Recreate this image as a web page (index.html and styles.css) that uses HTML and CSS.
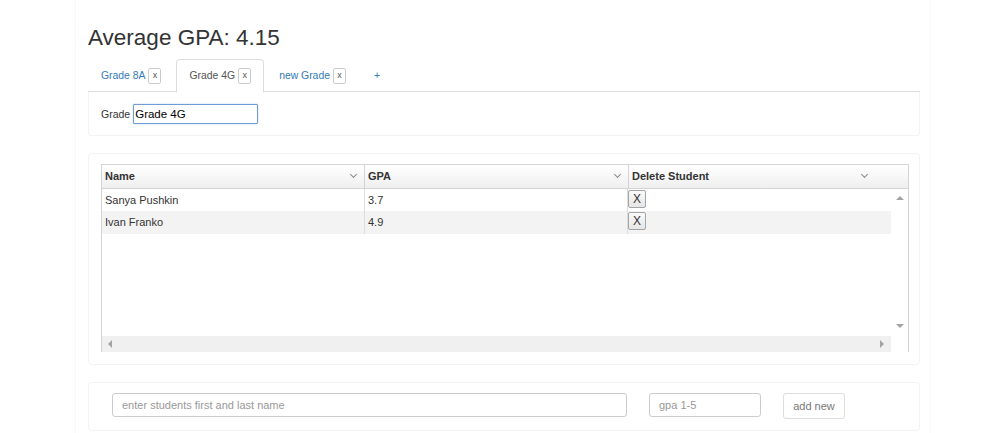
FILE: index.html
```html
<!DOCTYPE html>
<html>
<head>
<meta charset="utf-8">
<link rel="stylesheet" href="styles.css">
</head>
<body>
<div class="outer">
  <div class="container">
    <h1 class="title">Average GPA: 4.15</h1>
    <ul class="tabs">
      <li class="tab"><span class="tab-label">Grade 8A</span><span class="xbox">x</span></li>
      <li class="tab active"><span class="tab-label">Grade 4G</span><span class="xbox">x</span></li>
      <li class="tab"><span class="tab-label">new Grade</span><span class="xbox">x</span></li>
      <li class="tab"><span class="tab-label">+</span></li>
    </ul>
    <div class="panel panel-grade">
      <label class="grade-label">Grade</label>
      <input class="grade-input" type="text" value="Grade 4G">
    </div>
    <div class="panel panel-grid">
      <div class="grid">
        <div class="grid-header">
          <div class="hcell c1"><span>Name</span><span class="chev"></span></div>
          <div class="hcell c2"><span>GPA</span><span class="chev"></span></div>
          <div class="hcell c3"><span>Delete Student</span><span class="chev"></span></div>
        </div>
        <div class="grid-body">
          <div class="viewport">
            <div class="rows">
              <div class="row">
                <div class="cell c1">Sanya Pushkin</div>
                <div class="cell c2">3.7</div>
                <div class="cell c3"><button class="xbtn">X</button></div>
              </div>
              <div class="row alt">
                <div class="cell c1">Ivan Franko</div>
                <div class="cell c2">4.9</div>
                <div class="cell c3"><button class="xbtn">X</button></div>
              </div>
            </div>
            <div class="hscroll"><span class="arr arr-left"></span><span class="arr arr-right"></span></div>
          </div>
          <div class="vscroll"><span class="arr arr-up"></span><span class="arr arr-down"></span></div>
        </div>
      </div>
    </div>
    <div class="panel panel-add">
      <input class="name-input" type="text" placeholder="enter students first and last name">
      <input class="gpa-input" type="text" placeholder="gpa 1-5">
      <button class="add-btn">add new</button>
    </div>
  </div>
</div>
</body>
</html>
```

FILE: styles.css
```css
* { box-sizing: border-box; }
html, body { margin: 0; padding: 0; background: #fff; }
body {
  font-family: "Liberation Sans", Arial, Helvetica, sans-serif;
  color: #333;
  font-size: 11px;
}
.outer {
  margin-left: 75px;
  width: 856px;
  min-height: 433px;
  border-left: 1px solid #f9f9f9;
  border-right: 1px solid #f9f9f9;
  padding: 0 11px 0 12px;
}
.container { width: 832px; }
.title {
  margin: 0;
  padding-top: 24px;
  font-size: 22.5px;
  font-weight: normal;
  line-height: 28px;
  height: 59px;
  color: #333;
}
.tabs {
  list-style: none;
  margin: 0;
  padding: 0;
  display: flex;
  height: 33px;
  border-bottom: 1px solid #ddd;
}
.tab {
  display: flex;
  align-items: center;
  padding: 0 12px;
  margin-right: 2px;
  height: 33px;
  color: #337ab7;
  border: 1px solid transparent;
  border-radius: 4px 4px 0 0;
  font-size: 10.4px;
}
.tab.active {
  color: #555;
  border-color: #ddd;
  border-bottom-color: #fff;
  background: #fff;
  height: 34px;
}
.tab-label { line-height: 14px; }
.xbox {
  display: inline-block;
  margin-left: 3px;
  width: 13px;
  height: 16px;
  border: 1px solid #ccc;
  border-radius: 2px;
  color: #555;
  font-size: 9px;
  line-height: 13px;
  text-align: center;
}
.panel {
  border: 1px solid #f3f3f3;
  border-radius: 4px;
}
.panel-grade {
  border-top: none;
  border-radius: 0 0 4px 4px;
  height: 44px;
  display: flex;
  align-items: flex-start;
  padding: 12px 0 0 12px;
}
.grade-label { font-size: 10.5px; line-height: 20px; margin-right: 3px; }
.grade-input {
  width: 125px;
  height: 20px;
  border: 1px solid #6f9bd6;
  box-shadow: 0 0 2px #b5cdee;
  border-radius: 1px;
  font-family: "Liberation Sans", Arial, sans-serif;
  font-size: 11.5px;
  color: #000;
  padding: 0 1px;
  outline: none;
}
.panel-grid {
  margin-top: 17px;
  height: 212px;
  padding: 10px 10px 0 12px;
}
.grid {
  width: 808px;
  height: 188px;
  border: 1px solid #d4d4d4;
  border-bottom: none;
  display: flex;
  flex-direction: column;
}
.grid-header {
  display: flex;
  height: 24px;
  border-bottom: 1px solid #d4d4d4;
  background: linear-gradient(#fff, #efefef);
  font-weight: bold;
  color: #333;
}
.hcell {
  display: flex;
  justify-content: space-between;
  align-items: center;
  padding: 0 0 1px 3px;
  border-right: 1px solid #d4d4d4;
}
.hcell.c3 { border-right: none; width: 279px; padding-right: 33px; }
.c1 { width: 263px; }
.c2 { width: 264px; }
.chev {
  width: 5px; height: 5px;
  border-right: 1px solid #888;
  border-bottom: 1px solid #888;
  transform: rotate(45deg);
  margin-right: 8px;
  margin-top: -3px;
}
.grid-body { display: flex; flex: 1; }
.viewport { width: 790px; display: flex; flex-direction: column; }
.rows { flex: 1; }
.row { display: flex; height: 22px; }
.row.alt { background: #f3f3f3; height: 23px; }
.cell {
  padding-left: 3px;
  line-height: 22px;
  border-right: 1px solid #ddd;
  color: #333;
}
.row .c3 { border-right: none; padding-left: 0; flex: 1; }
.row .c2 { width: 263px; }
.xbtn {
  width: 18px;
  height: 18px;
  margin-top: 1px;
  padding: 0;
  border: 1px solid #a5a5a5;
  border-radius: 2px;
  background: linear-gradient(#fafafa, #e6e6e6);
  font-family: "Liberation Sans", Arial, sans-serif;
  font-size: 12px;
  color: #333;
  line-height: 16px;
  display: block;
}
.hscroll {
  height: 16px;
  background: #f0f0f0;
  display: flex;
  justify-content: space-between;
  align-items: center;
  padding: 0 7px 0 6px;
}
.vscroll {
  width: 17px;
  height: 147px;
  display: flex;
  flex-direction: column;
  justify-content: space-between;
  align-items: center;
  padding: 7px 0 8px;
}
.arr { width: 0; height: 0; border: 4px solid transparent; }
.arr-left { border-right-color: #a3a3a3; border-left-width: 0; }
.arr-right { border-left-color: #a3a3a3; border-right-width: 0; }
.arr-up { border-bottom-color: #a3a3a3; border-top-width: 0; }
.arr-down { border-top-color: #a3a3a3; border-bottom-width: 0; }
.panel-add {
  margin-top: 17px;
  height: 49px;
  display: flex;
  align-items: flex-start;
  padding: 10px 0 0 23px;
}
.name-input, .gpa-input {
  height: 24px;
  border: 1px solid #ccc;
  border-radius: 3px;
  padding: 0 9px;
  font-family: "Liberation Sans", Arial, sans-serif;
  font-size: 11px;
  color: #555;
}
.name-input::placeholder, .gpa-input::placeholder { color: #999; }
.name-input { width: 515px; }
.gpa-input { width: 112px; margin-left: 22px; }
.add-btn {
  margin-left: 22px;
  width: 62px;
  height: 26px;
  border: 1px solid #ddd;
  border-radius: 3px;
  background: #fff;
  font-family: "Liberation Sans", Arial, sans-serif;
  font-size: 11px;
  color: #777;
}
```
